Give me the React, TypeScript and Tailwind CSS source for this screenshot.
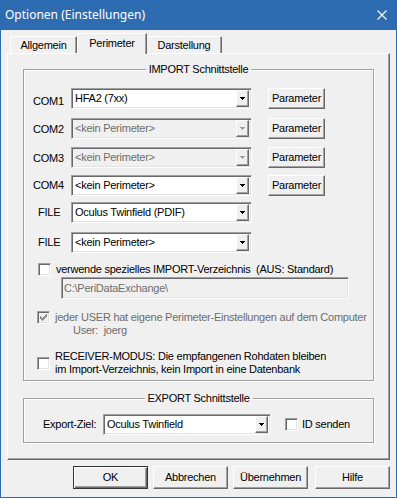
import React from "react";

const RAISED =
  "border border-t-white border-l-white border-r-[#696969] border-b-[#696969] shadow-[inset_-1px_-1px_0_#a0a0a0] bg-[#f0f0f0]";
const SUNKEN =
  "border border-t-[#a0a0a0] border-l-[#a0a0a0] border-r-white border-b-white shadow-[inset_1px_1px_0_#696969,inset_-1px_-1px_0_#e3e3e3]";

function Arrow({ gray }: { gray?: boolean }) {
  const c = gray ? "#a0a0a0" : "#000";
  return (
    <svg width="5" height="3" viewBox="0 0 5 3" shapeRendering="crispEdges">
      <rect x="0" y="0" width="5" height="1" fill={c} />
      <rect x="1" y="1" width="3" height="1" fill={c} />
      <rect x="2" y="2" width="1" height="1" fill={c} />
    </svg>
  );
}

function Combo({ value, disabled, w }: { value: string; disabled?: boolean; w: string }) {
  return (
    <div
      className={`${w} h-[21px] shrink-0 flex items-center ${SUNKEN} ${
        disabled ? "bg-[#f0f0f0] text-[#6d6d6d]" : "bg-white text-black"
      }`}
    >
      <span className="flex-1 pl-[3px] whitespace-nowrap overflow-hidden">{value}</span>
      <div className={`w-[13px] h-[17px] mr-[2px] shrink-0 flex items-center justify-center ${RAISED}`}>
        <Arrow gray={disabled} />
      </div>
    </div>
  );
}

function Btn({ label, w, className = "" }: { label: string; w: string; className?: string }) {
  return (
    <div className={`${w} h-[21px] shrink-0 flex items-center justify-center ${RAISED} ${className}`}>
      {label}
    </div>
  );
}

function Check({ checked, disabled }: { checked?: boolean; disabled?: boolean }) {
  const c = disabled ? "#8f8f8f" : "#000";
  return (
    <div
      className={`w-[13px] h-[13px] shrink-0 flex items-center justify-center ${SUNKEN} ${
        disabled ? "bg-[#f0f0f0]" : "bg-white"
      }`}
    >
      {checked && (
        <svg width="7" height="7" viewBox="0 0 7 7" shapeRendering="crispEdges">
          <rect x="6" y="0" width="1" height="3" fill={c} />
          <rect x="5" y="1" width="1" height="3" fill={c} />
          <rect x="4" y="2" width="1" height="3" fill={c} />
          <rect x="3" y="3" width="1" height="3" fill={c} />
          <rect x="2" y="4" width="1" height="3" fill={c} />
          <rect x="1" y="3" width="1" height="3" fill={c} />
          <rect x="0" y="2" width="1" height="3" fill={c} />
        </svg>
      )}
    </div>
  );
}

function Group({
  title,
  className,
  children,
}: {
  title: string;
  className: string;
  children: React.ReactNode;
}) {
  return (
    <div
      className={`relative shrink-0 border border-[#a0a0a0] shadow-[inset_1px_1px_0_#fff,1px_1px_0_#fff] flex flex-col ${className}`}
    >
      <div className="absolute left-1/2 -translate-x-1/2 top-[-7px] bg-[#f0f0f0] px-[3px] leading-[13px] whitespace-nowrap">
        {title}
      </div>
      {children}
    </div>
  );
}

function ComRow({
  label,
  value,
  disabled,
  mt,
  pl,
  button,
  labelClass = "",
}: {
  label: string;
  value: string;
  disabled?: boolean;
  mt: string;
  pl: string;
  button?: boolean;
  labelClass?: string;
}) {
  return (
    <div className={`flex items-center h-[21px] shrink-0 ${mt}`}>
      <div className={`w-[47px] shrink-0 ${pl} ${labelClass}`}>{label}</div>
      <Combo value={value} disabled={disabled} w="w-[181px]" />
      {button && <Btn label="Parameter" w="w-[57px]" className="ml-[16px]" />}
    </div>
  );
}

export default function App() {
  return (
    <div className="w-[397px] h-[498px] bg-[#f0f0f0] border border-[#2b6db5] flex flex-col overflow-hidden font-['Liberation_Sans',Arial,sans-serif] text-[11px] leading-[13px] tracking-[-0.25px] text-black">
      {/* Title bar */}
      <div className="h-[29px] shrink-0 bg-[#2d6cb1] flex items-center justify-between pl-[4px] pr-[9px]">
        <span className="font-['Noto_Sans',sans-serif] text-[12px] leading-[16px] tracking-normal text-white -mt-[2px]">
          Optionen (Einstellungen)
        </span>
        <svg width="10" height="10" viewBox="0 0 10 10" className="-mt-[2px]">
          <path d="M0.5 0.5 L9.5 9.5 M9.5 0.5 L0.5 9.5" stroke="#fff" strokeWidth="1.1" />
        </svg>
      </div>

      {/* Tabs */}
      <div className="h-[23px] shrink-0 flex items-end pl-[9px] relative z-10">
        <div className="w-[67px] h-[17px] flex items-center justify-center border-t border-l border-r border-t-white border-l-white border-r-[#696969] rounded-tl-[2px] shadow-[inset_-1px_0_0_#a0a0a0]">
          Allgemein
        </div>
        <div className="w-[70px] h-[21px] -mb-[1px] bg-[#f0f0f0] flex items-center justify-center border-t border-l border-r border-t-white border-l-white border-r-[#696969] rounded-tl-[2px] shadow-[inset_-1px_0_0_#a0a0a0] pb-[1px]">
          Perimeter
        </div>
        <div className="w-[75px] h-[17px] flex items-center justify-center border-t border-r border-t-white border-r-[#696969] rounded-tr-[1px] shadow-[inset_-1px_0_0_#a0a0a0]">
          Darstellung
        </div>
      </div>

      {/* Panel */}
      <div className="ml-[6px] w-[383px] h-[407px] shrink-0 border border-t-white border-l-white border-r-[#696969] border-b-[#696969] shadow-[inset_-1px_-1px_0_#a0a0a0] flex flex-col">
        <Group title="IMPORT Schnittstelle" className="ml-[15px] mt-[15px] w-[351px] h-[312px]">
          <ComRow label="COM1" value="HFA2 (7xx)" mt="mt-[18px]" pl="pl-[9px]" labelClass="mt-[5px]" button />
          <ComRow label="COM2" value="<kein Perimeter>" disabled mt="mt-[9px]" pl="pl-[9px]" labelClass="mt-[1px]" button />
          <ComRow label="COM3" value="<kein Perimeter>" disabled mt="mt-[8px]" pl="pl-[9px]" labelClass="mt-[1px]" button />
          <ComRow label="COM4" value="<kein Perimeter>" mt="mt-[7px]" pl="pl-[9px]" button />
          <ComRow label="FILE" value="Oculus Twinfield (PDIF)" mt="mt-[6px]" pl="pl-[14px]" />
          <ComRow label="FILE" value="<kein Perimeter>" mt="mt-[9px]" pl="pl-[14px]" />

          <div className="flex items-center h-[13px] mt-[10px] shrink-0">
            <div className="ml-[14px]">
              <Check />
            </div>
            <span className="ml-[5px] whitespace-pre">verwende spezielles IMPORT-Verzeichnis  (AUS: Standard)</span>
          </div>

          <div
            className={`ml-[37px] mt-[1px] w-[288px] h-[22px] shrink-0 flex items-center bg-[#f0f0f0] text-[#6d6d6d] pl-[2px] ${SUNKEN}`}
          >
            C:\PeriDataExchange\
          </div>

          <div className="flex items-center h-[13px] mt-[12px] shrink-0">
            <div className="ml-[13px]">
              <Check checked disabled />
            </div>
            <span className="ml-[5px] whitespace-nowrap text-[#6d6d6d]">
              jeder USER hat eigene Perimeter-Einstellungen auf dem Computer
            </span>
          </div>
          <div className="h-[13px] pl-[49px] shrink-0 text-[#6d6d6d] whitespace-pre">User:  joerg</div>

          <div className="flex items-center mt-[13px] shrink-0">
            <div className="ml-[13px]">
              <Check />
            </div>
            <div className="ml-[5px] leading-[13px] flex flex-col">
              <span>RECEIVER-MODUS: Die empfangenen Rohdaten bleiben</span>
              <span>im Import-Verzeichnis, kein Import in eine Datenbank</span>
            </div>
          </div>
        </Group>

        <Group title="EXPORT Schnittstelle" className="ml-[15px] mt-[17px] w-[351px] h-[45px]">
          <div className="flex items-center h-[21px] mt-[15px] shrink-0">
            <div className="w-[79px] pl-[19px] shrink-0">Export-Ziel:</div>
            <Combo value="Oculus Twinfield" w="w-[168px]" />
            <div className="ml-[14px]">
              <Check />
            </div>
            <span className="ml-[4px]">ID senden</span>
          </div>
        </Group>
      </div>

      {/* Buttons */}
      <div className="flex mt-[6px] shrink-0">
        <div className="ml-[72px] w-[75px] h-[23px] flex items-center justify-center bg-[#f0f0f0] border border-[#333] shadow-[inset_1px_1px_0_#fff,inset_-1px_-1px_0_#696969,inset_-2px_-2px_0_#a0a0a0]">
          OK
        </div>
        <div className={`ml-[5px] w-[75px] h-[23px] flex items-center justify-center ${RAISED}`}>Abbrechen</div>
        <div className={`ml-[5px] w-[75px] h-[23px] flex items-center justify-center ${RAISED}`}>Übernehmen</div>
        <div className={`ml-[7px] w-[75px] h-[23px] flex items-center justify-center ${RAISED}`}>Hilfe</div>
      </div>
    </div>
  );
}
